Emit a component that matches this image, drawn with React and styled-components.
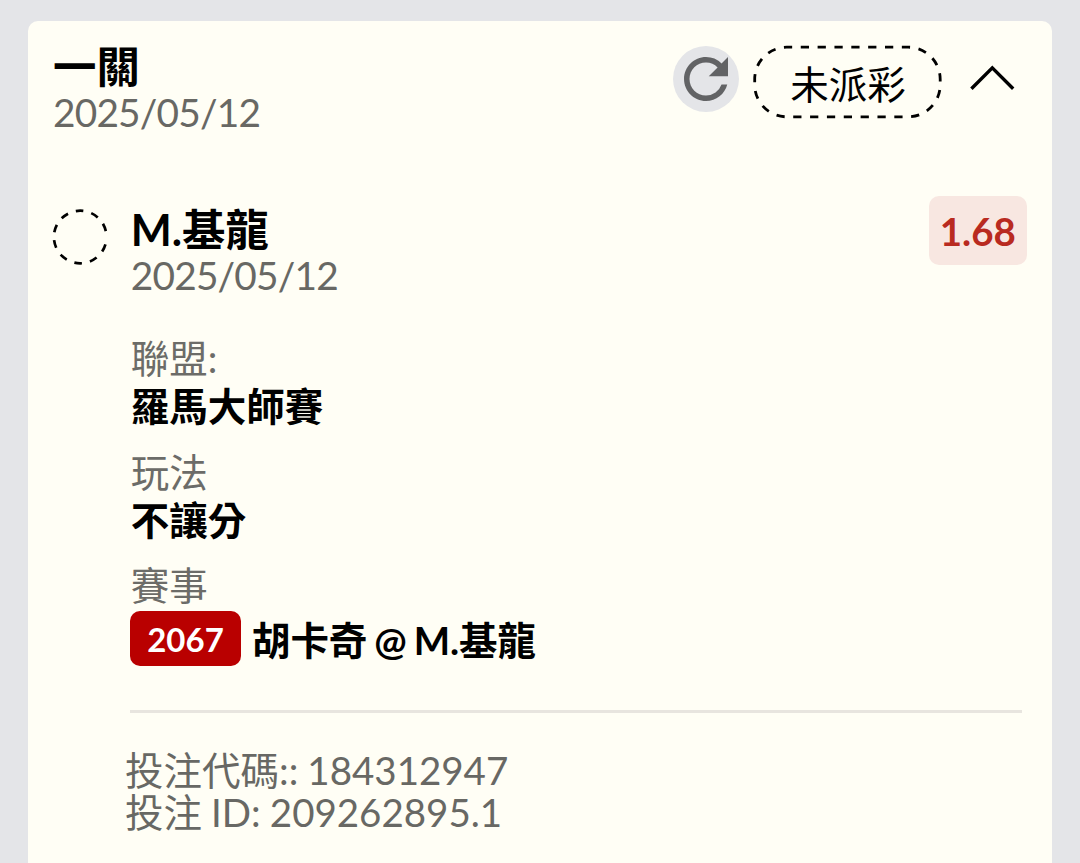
import React from 'react'
import styled, { createGlobalStyle } from 'styled-components'
import { MdRefresh } from 'react-icons/md'

const details = [
  { label: '聯盟:', value: '羅馬大師賽' },
  { label: '玩法', value: '不讓分' },
]

const App = () => {
  return (
    <>
      <GlobalStyle />
      <Page>
        <Card>
          <Header>
            <div>
              <Title>一關</Title>
              <DateText>2025/05/12</DateText>
            </div>
            <Actions>
              <RefreshButton type='button' aria-label='refresh'>
                <MdRefresh />
              </RefreshButton>
              <Status>
                <svg width='190' height='74' viewBox='0 0 190 74'>
                  <rect
                    x='1.7'
                    y='2.2'
                    width='185.5'
                    height='69.6'
                    rx='32'
                    pathLength='27'
                    strokeDasharray='0.49 0.51'
                    strokeDashoffset='0.166'
                  />
                </svg>
                <span>未派彩</span>
              </Status>
              <ToggleButton type='button' aria-label='toggle'>
                <svg width='46' height='28' viewBox='0 0 46 28'>
                  <path d='M2.4 24.8 23.3 3.8 44.2 24.8' />
                </svg>
              </ToggleButton>
            </Actions>
          </Header>
          <Bet>
            <Marker width='56' height='56' viewBox='0 0 56 56'>
              <circle
                cx='28.2'
                cy='28'
                r='26.3'
                pathLength='360'
                strokeDasharray='17 17.8'
                strokeDashoffset='-16.5'
              />
            </Marker>
            <Content>
              <BetHeader>
                <div>
                  <Title>M.基龍</Title>
                  <DateText>2025/05/12</DateText>
                </div>
                <Odds>1.68</Odds>
              </BetHeader>
              <Details>
                {details.map(({ label, value }) => (
                  <Detail key={label}>
                    <Label>{label}</Label>
                    <Value>{value}</Value>
                  </Detail>
                ))}
                <Detail>
                  <Label>賽事</Label>
                  <Match>
                    <MatchId>2067</MatchId>
                    <Value>胡卡奇 @ M.基龍</Value>
                  </Match>
                </Detail>
              </Details>
              <Divider />
              <Footer>
                <p>投注代碼:: 184312947</p>
                <p>投注 ID: 209262895.1</p>
              </Footer>
            </Content>
          </Bet>
        </Card>
      </Page>
    </>
  )
}

const GlobalStyle = createGlobalStyle`
  * {
    box-sizing: border-box;
  }
  body {
    margin: 0;
    overflow: hidden;
    background: #e4e5e8;
    font-family: Lato, 'Noto Sans CJK TC', sans-serif;
    font-size: 38.5px;
    color: #000;
  }
  h2, p {
    margin: 0;
  }
  button {
    padding: 0;
    border: 0;
    background: none;
  }
`
const Page = styled.main`
  height: 863px;
  padding: 21px 28px 0;
  overflow: hidden;
`
const Card = styled.section`
  height: 900px;
  padding: 22px 25px 0;
  border-radius: 10px;
  background: #fffef5;
`
const Header = styled.header`
  display: flex;
  align-items: flex-start;
  justify-content: space-between;
  height: 163px;
`
const Title = styled.h2`
  height: 47px;
  font-size: 43.4px;
  font-weight: 700;
  line-height: 47px;
  white-space: nowrap;
`
const DateText = styled.p`
  height: 44px;
  font-size: 38.8px;
  letter-spacing: -0.8px;
  line-height: 44px;
  color: #686864;
`
const Actions = styled.div`
  display: flex;
  align-items: flex-start;
  padding: 2px 12px 0 0;
`
const RefreshButton = styled.button`
  display: flex;
  width: 66px;
  height: 66px;
  margin: 1px 14px 0 0;
  border-radius: 50%;
  background: #e4e5e8;
  color: #626365;
  svg {
    width: 66px;
    height: 66px;
  }
`
const Status = styled.div`
  position: relative;
  display: flex;
  align-items: center;
  justify-content: center;
  width: 190px;
  height: 74px;
  svg {
    position: absolute;
    inset: 0;
    fill: none;
    stroke: #000;
    stroke-width: 2.8;
  }
`
const ToggleButton = styled.button`
  display: flex;
  margin: 19px 0 0 26px;
  svg {
    fill: none;
    stroke: #000;
    stroke-width: 3.4;
  }
`
const Bet = styled.article`
  display: flex;
  align-items: flex-start;
`
const Marker = styled.svg`
  flex: none;
  margin: 3px 22px 0 -1px;
  fill: none;
  stroke: #000;
  stroke-width: 2.7;
`
const Content = styled.div`
  flex: 1;
`
const BetHeader = styled.div`
  display: flex;
  align-items: flex-start;
  justify-content: space-between;
  height: 129px;
  padding-left: 0.8px;
`
const Odds = styled.div`
  width: 98.5px;
  height: 69.5px;
  margin-top: -10.5px;
  border-radius: 10px;
  background: #f8e7e1;
  color: #b92a20;
  font-weight: 700;
  line-height: 71px;
  text-align: center;
`
const Details = styled.div`
  display: flex;
  flex-direction: column;
  gap: 18.5px;
  padding-left: 0.7px;
`
const Detail = styled.div`
  display: flex;
  flex-direction: column;
`
const Label = styled.p`
  height: 47px;
  line-height: 47px;
  color: #6c6c68;
`
const Value = styled.p`
  height: 48px;
  font-weight: 700;
  line-height: 48px;
  white-space: nowrap;
  word-spacing: -2.2px;
`
const Match = styled.div`
  display: flex;
  align-items: center;
  gap: 11px;
  height: 56px;
  margin: 1px 0 0 -0.7px;
  ${Value} {
    letter-spacing: -0.1px;
    line-height: 52px;
  }
`
const MatchId = styled.span`
  width: 111px;
  height: 55px;
  border-radius: 10px;
  background: #b90000;
  color: #fff;
  font-size: 33px;
  font-weight: 700;
  line-height: 56px;
  text-align: center;
`
const Divider = styled.hr`
  height: 3px;
  margin: 44px 5px 36px 0;
  border: 0;
  background: #e8e5df;
`
const Footer = styled.footer`
  margin-left: -5px;
  line-height: 42px;
  word-spacing: -0.8px;
  color: #686864;
`

export default App
